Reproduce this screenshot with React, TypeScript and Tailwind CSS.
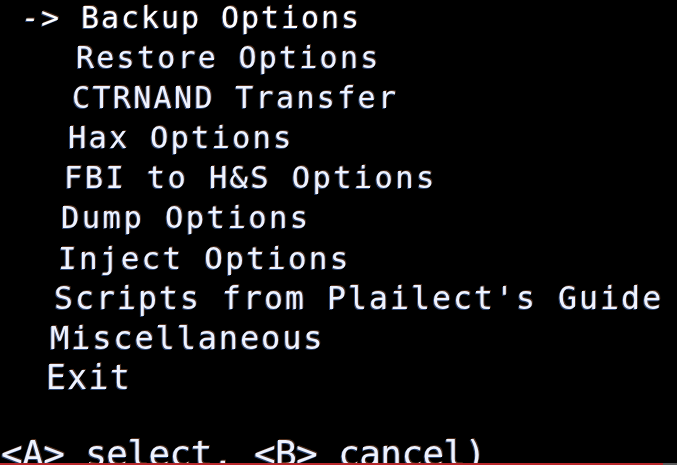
import React from 'react';

type Row = { text: string; cls: string };

// each line sits a little further left and grows (photo taken at an angle)
const rows: Row[] = [
  { text: '-> Backup Options', cls: 'pl-[21px] text-[30px] tracking-[1.94px] text-white' },
  { text: 'Restore Options', cls: 'pl-[76px] text-[30px] tracking-[2.24px]' },
  { text: 'CTRNAND Transfer', cls: 'pl-[72px] text-[30px] tracking-[2.34px]' },
  { text: 'Hax Options', cls: 'pl-[68px] text-[30.5px] tracking-[2.14px]' },
  { text: 'FBI to H&S Options', cls: 'pl-[64px] text-[30.5px] tracking-[2.34px]' },
  { text: 'Dump Options', cls: 'pl-[61px] text-[30.5px] tracking-[2.44px]' },
  { text: 'Inject Options', cls: 'pl-[58px] text-[31px] tracking-[2.24px]' },
  { text: "Scripts from Plailect's Guide", cls: 'pl-[54px] text-[31.5px] tracking-[2.04px]' },
  { text: 'Miscellaneous', cls: 'pl-[50px] text-[32px] tracking-[1.84px]' },
  { text: 'Exit', cls: 'pl-[46px] text-[33px] tracking-[1.43px]' },
];

export default function App() {
  return (
    <div className="w-[677px] h-[465px] bg-black flex flex-col overflow-hidden">
      <div
        className="flex-1 overflow-hidden text-[#eef3ff] blur-[0.4px] [text-shadow:-1px_1px_0_rgba(90,150,255,0.45),1px_-1px_0_rgba(255,150,90,0.3)]"
        style={{ fontFamily: '"DejaVu Sans Mono", "Liberation Mono", monospace' }}
      >
        <div className="-mt-[2px] flex flex-col">
          {rows.map((r) => (
            <div key={r.text} className={`h-10 leading-[40px] whitespace-pre ${r.cls}`}>
              {r.text}
            </div>
          ))}
          {/* bottom hint line, cut off by the screen edge */}
          <div className="mt-[36px] h-10 leading-[40px] whitespace-pre pl-[1px] text-[36px] tracking-[-0.6px]">
            {'<A> select, <B> cancel)'}
          </div>
        </div>
      </div>
      <div className="h-[2px] flex">
        <div className="w-[663px] bg-[#b8282b]" />
        <div className="flex-1 bg-[#5a5a5a]" />
      </div>
    </div>
  );
}
